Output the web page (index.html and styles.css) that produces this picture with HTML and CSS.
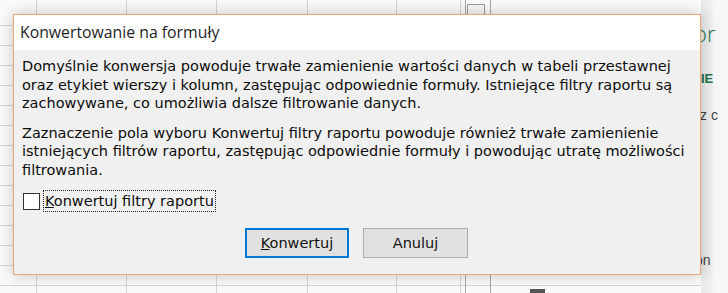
FILE: index.html
```html
<!DOCTYPE html>
<html lang="pl">
<head>
    <meta charset="UTF-8">
    <title>Konwertowanie na formuły</title>
    <link rel="stylesheet" href="styles.css">
</head>
<body>

    <div class="workspace">
        <div class="sheet">
            <div class="col c1"></div>
            <div class="col c2"></div>
            <div class="col c3"></div>
            <div class="col c4"></div>
            <div class="col c5"></div>
            <div class="col c6"></div>
            <div class="col c7"></div>
            <div class="col c8"></div>
            <span class="filter-btn"></span>
            <span class="sheet-mark"></span>
        </div>
        <div class="task-pane">
            <span class="pane-title">or</span>
            <span class="pane-head">IE</span>
            <span class="pane-text">z c</span>
            <span class="pane-text pane-last">on</span>
        </div>
    </div>

    <!-- dialog window sits over the worksheet -->
    <div class="dialog">
        <div class="dialog-title">Konwertowanie na formuły</div>
        <div class="dialog-body">
            <p>Domyślnie konwersja powoduje trwałe zamienienie wartości danych w tabeli przestawnej<br>
            oraz etykiet wierszy i kolumn, zastępując odpowiednie formuły. Istniejące filtry raportu są<br>
            zachowywane, co umożliwia dalsze filtrowanie danych.</p>
            <p>Zaznaczenie pola wyboru Konwertuj filtry raportu powoduje również trwałe zamienienie<br>
            istniejących filtrów raportu, zastępując odpowiednie formuły i powodując utratę możliwości<br>
            filtrowania.</p>
            <label class="check-row">
                <span class="check-box"></span>
                <span class="check-label"><u>K</u>onwertuj filtry raportu</span>
            </label>
            <div class="buttons">
                <button class="btn btn-default"><u>K</u>onwertuj</button>
                <button class="btn">Anuluj</button>
            </div>
        </div>
    </div>

</body>
</html>
```

FILE: styles.css
```css
body {
    margin: 0;
    width: 728px;
    height: 293px;
    overflow: hidden;
    position: relative;
    background: #ffffff;
    font-family: "DejaVu Sans", Verdana, sans-serif;
}

.workspace {
    display: flex;
    height: 293px;
}

/* worksheet grid behind the dialog */
.sheet {
    position: relative;
    display: flex;
    width: 701px;
    height: 293px;
    background-color: #fafafa;
    background-image: repeating-linear-gradient(to bottom, transparent 0, transparent 19px, #d6d6d6 19px, #d6d6d6 20px);
    background-position: 0 6px;
}

.col {
    border-right: 1px solid #d4d4d4;
    box-sizing: border-box;
}

.c1 { width: 37px; }
.c2 { width: 90px; }
.c3 { width: 90px; }
.c4 { width: 91px; }
.c5 { width: 89px; }
.c6 { width: 64px; }
.c7 { width: 5px; border-right-color: #a8a8a8; }
.c8 { width: 25px; border-right-color: #a8a8a8; }

.filter-btn {
    position: absolute;
    left: 467px;
    top: 4px;
    width: 16px;
    height: 12px;
    border: 1px solid #9a9a9a;
    background: #f6f6f6;
}

.sheet-mark {
    position: absolute;
    left: 530px;
    top: 289px;
    width: 15px;
    height: 4px;
    background: #555;
}

.task-pane {
    flex: 1;
    background: linear-gradient(to right, #eaeaea 0, #eeeeee 11px, #f6f6f6 12px, #f8f8f8 100%);
    display: flex;
    flex-direction: column;
    white-space: nowrap;
    font-family: "Liberation Sans", Arial, sans-serif;
}

.pane-title {
    margin: 20px 0 0 -7px;
    font-size: 22px;
    line-height: 26px;
    color: #217346;
    font-family: "Open Sans", sans-serif;
    font-weight: 300;
}

.pane-head {
    margin: 25px 0 0 0;
    font-size: 13px;
    line-height: 15px;
    font-weight: bold;
    color: #217346;
}

.pane-text {
    margin: 21px 0 0 -1px;
    font-size: 14px;
    line-height: 16px;
    color: #444;
}

.pane-last {
    margin-top: 129px;
    margin-left: -6px;
}

/* dialog */
.dialog {
    position: absolute;
    left: 13px;
    top: 14px;
    width: 688px;
    height: 261px;
    box-sizing: border-box;
    border: 1px solid #e9a77c;
    background: #f0f0f0;
    box-shadow: 0 0 14px rgba(0, 0, 0, 0.22);
    display: flex;
    flex-direction: column;
}

.dialog-title {
    height: 35px;
    background: #ffffff;
    padding-left: 6px;
    line-height: 35px;
    font-family: "Open Sans", "Noto Sans", sans-serif;
    font-size: 15.8px;
    color: #1e1e1e;
}

.dialog-body {
    flex: 1;
    padding: 7px 0 0 8px;
    color: #0d0d0d;
    font-size: 14.5px;
}

.dialog-body p {
    margin: 0 0 11px 0;
    line-height: 18.5px;
}

.check-row {
    display: flex;
    align-items: center;
    margin-top: 11px;
    margin-left: 1px;
}

.check-box {
    width: 17px;
    height: 17px;
    box-sizing: border-box;
    border: 1px solid #333;
    background: #fff;
}

.check-label {
    margin-left: 3px;
    padding: 1px 1px;
    border: 1px dotted #222;
    line-height: 18px;
}

.buttons {
    display: flex;
    gap: 14px;
    margin: 16px 0 0 223px;
}

.btn {
    width: 105px;
    height: 30px;
    box-sizing: border-box;
    border: 1px solid #adadad;
    background: #e1e1e1;
    font-family: "DejaVu Sans", Verdana, sans-serif;
    font-size: 14.5px;
    color: #111;
    padding: 0;
}

.btn-default {
    border: 2px solid #0078d7;
    width: 104px;
}
```
